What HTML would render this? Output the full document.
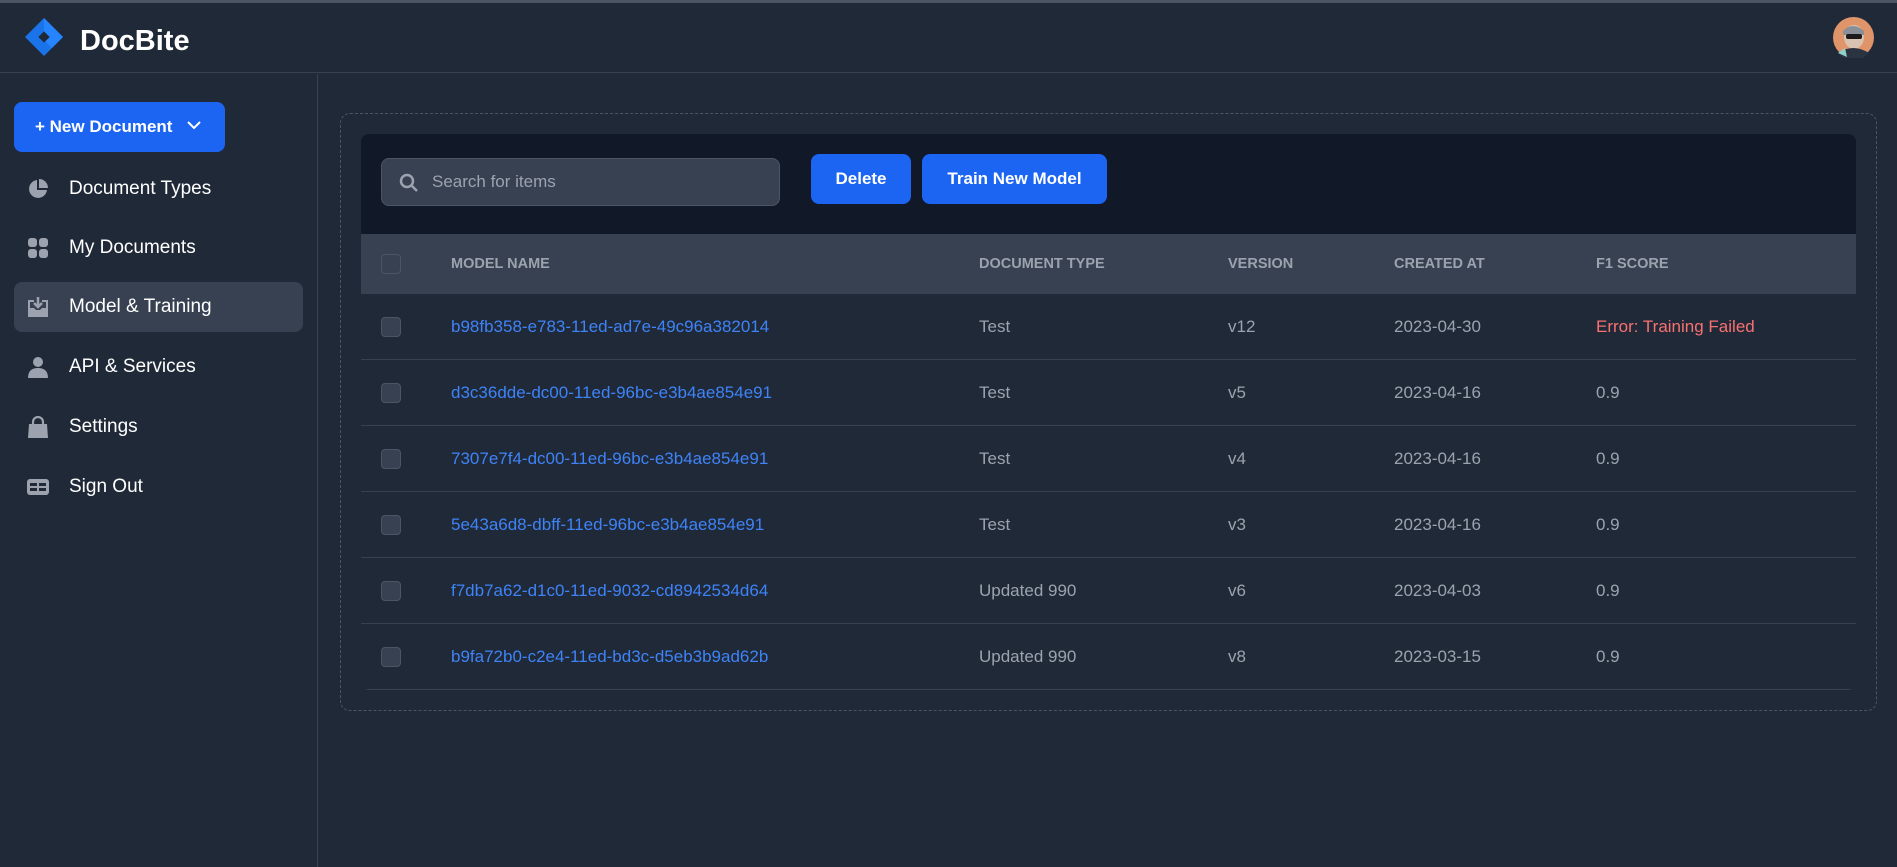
<!DOCTYPE html>
<html><head><meta charset="utf-8"><style>
*{box-sizing:border-box;margin:0;padding:0}
body{width:1897px;height:867px;background:#1f2937;font-family:"Liberation Sans",sans-serif;color:#fff;position:relative;overflow:hidden}
.topline{position:absolute;left:0;top:0;width:100%;height:3px;background:#4b5563}
.top{position:absolute;left:0;top:3px;width:100%;height:70px;border-bottom:1px solid #374151}
.brand{position:absolute;left:80px;top:22px;font-size:29px;font-weight:bold}
.side{position:absolute;left:0;top:74px;width:318px;height:793px;border-right:1px solid #374151}
.newbtn{position:absolute;left:14px;top:28px;width:211px;height:50px;background:#1c64f2;border-radius:8px;font-weight:bold;font-size:17px;line-height:50px;padding-left:21px}
.nav{position:absolute;left:14px;width:289px;height:50px;border-radius:8px;font-size:19px;line-height:50px;padding-left:55px}
.nav svg{position:absolute;left:13px;top:14px}
.nav.act{background:#374151}
.dash{position:absolute;left:340px;top:113px;width:1537px;height:598px;border:1.5px dashed #4b5563;border-radius:10px}
.card{position:absolute;left:361px;top:134px;width:1495px;height:556px;border-radius:8px;overflow:hidden;background:#1f2937}
.tb{height:100px;background:#111827;position:relative}
.search{position:absolute;left:20px;top:24px;width:399px;height:48px;background:#374151;border:1px solid #4b5563;border-radius:8px;color:#9ca3af;font-size:17px;line-height:46px;padding-left:50px}
.search svg{position:absolute;left:17px;top:14px}
.btn{position:absolute;top:20px;height:50px;background:#1c64f2;border-radius:8px;font-weight:bold;font-size:17px;line-height:50px;text-align:center}
.row{position:absolute;left:0;width:100%;height:66px;border-bottom:1px solid #374151;font-size:17px;color:#9ca3af}
.row span{position:absolute;top:0;line-height:66px}
.hdr{background:#374151;height:60px;border:none;font-size:14.5px;font-weight:bold}
.hdr span{line-height:60px}
.cb{position:absolute;left:20px;width:20px;height:20px;border-radius:4px;background:#374151;border:1px solid #4b5563}
.row .l{color:#3f83f8}
</style></head><body>
<div class="topline"></div>
<div class="top">
<svg style="position:absolute;left:24px;top:14px" width="40" height="40" viewBox="0 0 40 40"><path d="M20 1 L39 20 L20 39 L1 20Z" fill="#1a73e8"/><path d="M20 1 L39 20 L28 31 L20 23Z" fill="#2684ff"/><rect x="16" y="16" width="8" height="8" transform="rotate(45 20 20)" fill="#1f2937"/></svg>
<div class="brand">DocBite</div>
<svg style="position:absolute;left:1833px;top:14px" width="41" height="41" viewBox="0 0 41 41"><circle cx="20.5" cy="20.5" r="20.5" fill="#e0946a"/><ellipse cx="21" cy="20" rx="10" ry="12" fill="#d9c2b0"/><path d="M10 14 Q20 4 31 14 L31 18 L10 18Z" fill="#8a8f96"/><rect x="13" y="17" width="16" height="5" rx="2" fill="#1b1b1b"/><path d="M5 36 Q20 26 36 36 L30 41 L10 41Z" fill="#2a3340"/><path d="M5 36 L12 31 L14 40Z" fill="#8fd0c8"/></svg>
</div>
<div class="side">
<div class="newbtn">+ New Document <svg style="position:absolute;left:173px;top:19px" width="14" height="10" viewBox="0 0 14 10"><path d="M1 1 L7 7 L13 1" stroke="#fff" stroke-width="2" fill="none"/></svg></div>
<div class="nav" style="top:90px"><svg width="22" height="22" viewBox="0 0 22 22"><path d="M10 2 A9 9 0 1 0 20 12 L10 12Z" fill="#9ca3af"/><path d="M12 1 A9 9 0 0 1 21 10 L12 10Z" fill="#9ca3af"/></svg>Document Types</div>
<div class="nav" style="top:149px"><svg width="22" height="22" viewBox="0 0 22 22"><rect x="1" y="1" width="9" height="9" rx="3" fill="#9ca3af"/><rect x="12" y="1" width="9" height="9" rx="3" fill="#9ca3af"/><rect x="1" y="12" width="9" height="9" rx="3" fill="#9ca3af"/><rect x="12" y="12" width="9" height="9" rx="3" fill="#9ca3af"/></svg>My Documents</div>
<div class="nav act" style="top:208px"><svg width="22" height="22" viewBox="0 0 22 22"><path d="M1 4 L7 4 L7 6 L3 6 L3 12 L7 12 L9 14 L13 14 L15 12 L19 12 L19 6 L15 6 L15 4 L21 4 L21 21 L1 21Z" fill="#9ca3af"/><path d="M11 1 L11 10 M7 7 L11 11 L15 7" stroke="#9ca3af" stroke-width="2.5" fill="none"/></svg>Model &amp; Training</div>
<div class="nav" style="top:268px"><svg width="22" height="22" viewBox="0 0 22 22"><circle cx="11" cy="6" r="5" fill="#9ca3af"/><path d="M1 22 Q1 12 11 12 Q21 12 21 22Z" fill="#9ca3af"/></svg>API &amp; Services</div>
<div class="nav" style="top:328px"><svg width="22" height="22" viewBox="0 0 22 22"><path d="M6 8 L6 6 A5 5 0 0 1 16 6 L16 8" stroke="#9ca3af" stroke-width="2.2" fill="none"/><path d="M2 8 L20 8 L21 22 L1 22Z" fill="#9ca3af"/></svg>Settings</div>
<div class="nav" style="top:388px"><svg width="22" height="22" viewBox="0 0 22 22"><rect x="0" y="3" width="22" height="16" rx="3" fill="#9ca3af"/><rect x="3" y="7" width="7" height="3" fill="#1f2937"/><rect x="12" y="7" width="7" height="3" fill="#1f2937"/><rect x="3" y="12" width="7" height="3" fill="#1f2937"/><rect x="12" y="12" width="7" height="3" fill="#1f2937"/></svg>Sign Out</div>
</div>
<div class="dash"></div>
<div class="card">
<div class="tb">
<div class="search"><svg width="20" height="20" viewBox="0 0 20 20"><circle cx="8" cy="8" r="6" stroke="#9ca3af" stroke-width="2.5" fill="none"/><path d="M12.5 12.5 L18 18" stroke="#9ca3af" stroke-width="2.5"/></svg>Search for items</div>
<div class="btn" style="left:450px;width:100px">Delete</div>
<div class="btn" style="left:561px;width:185px">Train New Model</div>
</div>
<div class="row hdr" style="top:100px"><div class="cb" style="top:20px"></div><span style="left:90px">MODEL NAME</span><span style="left:618px">DOCUMENT TYPE</span><span style="left:867px">VERSION</span><span style="left:1033px">CREATED AT</span><span style="left:1235px">F1 SCORE</span></div>
<div class="row" style="top:160px"><div class="cb" style="top:23px"></div><span class="l" style="left:90px">b98fb358-e783-11ed-ad7e-49c96a382014</span><span style="left:618px">Test</span><span style="left:867px">v12</span><span style="left:1033px">2023-04-30</span><span style="left:1235px;color:#f87171">Error: Training Failed</span></div>
<div class="row" style="top:226px"><div class="cb" style="top:23px"></div><span class="l" style="left:90px">d3c36dde-dc00-11ed-96bc-e3b4ae854e91</span><span style="left:618px">Test</span><span style="left:867px">v5</span><span style="left:1033px">2023-04-16</span><span style="left:1235px">0.9</span></div>
<div class="row" style="top:292px"><div class="cb" style="top:23px"></div><span class="l" style="left:90px">7307e7f4-dc00-11ed-96bc-e3b4ae854e91</span><span style="left:618px">Test</span><span style="left:867px">v4</span><span style="left:1033px">2023-04-16</span><span style="left:1235px">0.9</span></div>
<div class="row" style="top:358px"><div class="cb" style="top:23px"></div><span class="l" style="left:90px">5e43a6d8-dbff-11ed-96bc-e3b4ae854e91</span><span style="left:618px">Test</span><span style="left:867px">v3</span><span style="left:1033px">2023-04-16</span><span style="left:1235px">0.9</span></div>
<div class="row" style="top:424px"><div class="cb" style="top:23px"></div><span class="l" style="left:90px">f7db7a62-d1c0-11ed-9032-cd8942534d64</span><span style="left:618px">Updated 990</span><span style="left:867px">v6</span><span style="left:1033px">2023-04-03</span><span style="left:1235px">0.9</span></div>
<div class="row" style="top:490px"><div class="cb" style="top:23px"></div><span class="l" style="left:90px">b9fa72b0-c2e4-11ed-bd3c-d5eb3b9ad62b</span><span style="left:618px">Updated 990</span><span style="left:867px">v8</span><span style="left:1033px">2023-03-15</span><span style="left:1235px">0.9</span></div>
</div>
</body></html>
